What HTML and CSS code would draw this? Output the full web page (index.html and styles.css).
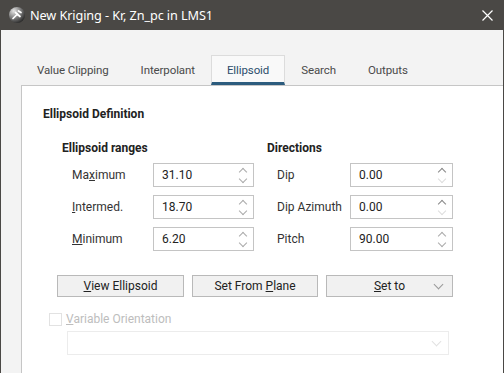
FILE: index.html
```html
<!DOCTYPE html>
<html lang="en">
<head>
  <meta charset="UTF-8">
  <title>New Kriging - Kr, Zn_pc in LMS1</title>
  <link rel="stylesheet" href="styles.css">
</head>
<body>
<div class="window">
  <!-- title bar -->
  <div class="titlebar">
    <svg class="logo" width="16" height="16" viewBox="0 0 16 16">
      <defs>
        <radialGradient id="lg" cx="0.3" cy="0.25" r="0.85">
          <stop offset="0" stop-color="#e6e6e6"/>
          <stop offset="0.45" stop-color="#8a8a8a"/>
          <stop offset="1" stop-color="#202020"/>
        </radialGradient>
      </defs>
      <circle cx="8" cy="8" r="8" fill="url(#lg)"/>
      <path d="M4 11.5 L8.5 7 M6.5 5.5 L11 9.5 M9.5 4 L12 5.5" stroke="#fff" stroke-width="1.7" stroke-linecap="round" fill="none"/>
    </svg>
    <span class="title">New Kriging - Kr, Zn_pc in LMS1</span>
    <svg class="close" width="11" height="11" viewBox="0 0 11 11">
      <path d="M0.5 0.5 L10.5 10.5 M10.5 0.5 L0.5 10.5" stroke="#fff" stroke-width="1.2"/>
    </svg>
  </div>

  <div class="content">
    <div class="tabs">
      <div class="tab">Value Clipping</div>
      <div class="tab">Interpolant</div>
      <div class="tab active">Ellipsoid</div>
      <div class="tab">Search</div>
      <div class="tab">Outputs</div>
    </div>

    <div class="panel">
      <div class="heading">Ellipsoid Definition</div>

      <div class="groups">
        <div class="group ranges">
          <div class="subheading">Ellipsoid ranges</div>
          <div class="row"><span class="label">Ma<u>x</u>imum</span><div class="spin"><span>31.10</span><i class="arrows"><b class="up"></b><b class="down"></b></i></div></div>
          <div class="row"><span class="label"><u>I</u>ntermed.</span><div class="spin"><span>18.70</span><i class="arrows"><b class="up"></b><b class="down"></b></i></div></div>
          <div class="row"><span class="label"><u>M</u>inimum</span><div class="spin"><span>6.20</span><i class="arrows"><b class="up"></b><b class="down"></b></i></div></div>
        </div>
        <div class="group directions">
          <div class="subheading">Directions</div>
          <div class="row"><span class="label">Dip</span><div class="spin"><span>0.00</span><i class="arrows"><b class="up dark"></b><b class="down faint"></b></i></div></div>
          <div class="row"><span class="label">Dip Azimuth</span><div class="spin"><span>0.00</span><i class="arrows"><b class="up dark"></b><b class="down faint"></b></i></div></div>
          <div class="row"><span class="label">Pitch</span><div class="spin"><span>90.00</span><i class="arrows"><b class="up"></b><b class="down"></b></i></div></div>
        </div>
      </div>

      <div class="buttons">
        <div class="btn"><u>V</u>iew Ellipsoid</div>
        <div class="btn">Set From <u>P</u>lane</div>
        <div class="btn dropdown"><u>S</u>et to<b class="chev"></b></div>
      </div>

      <div class="check">
        <span class="box"></span>
        <span><u>V</u>ariable Orientation</span>
      </div>
      <div class="combo"><b class="chev"></b></div>
    </div>
  </div>
</div>
</body>
</html>
```

FILE: styles.css
```css
body {
  margin: 0;
  font-family: Roboto, "Noto Sans", sans-serif;
  font-size: 12px;
  color: #333;
}

.window {
  width: 502px;
  height: 373px;
  border-left: 1px solid #4a4845;
  border-right: 1px solid #4a4845;
  background: #f3f3f3;
  overflow: hidden;
}

.titlebar {
  height: 30px;
  background: #4a4845;
  display: flex;
  align-items: center;
  color: #fff;
}

.logo {
  margin-left: 8px;
}

.title {
  margin-left: 5px;
  font-family: "Noto Sans", sans-serif;
  font-size: 12.7px;
  letter-spacing: -0.1px;
}

.close {
  margin-left: auto;
  margin-right: 10px;
}

.content {
  padding: 25px 0 0 20px;
}

.tabs {
  display: flex;
  height: 30px;
}

.tab {
  padding: 0 16px;
  line-height: 31px;
  font-size: 11.5px;
  letter-spacing: -0.1px;
  color: #4a4a4a;
}

.tab.active {
  background: #f9f9f9;
  border: 1px solid #dcdcdc;
  border-bottom: 3px solid #2c5c7e;
  padding: 0 15px;
  line-height: 28px;
  color: #2c4d6c;
  box-sizing: border-box;
}

.panel {
  width: 460px;
  height: 300px;
  background: #fff;
  border: 1px solid #c6c6c6;
  padding: 20px 0 0 21px;
}

.heading {
  font-weight: bold;
  color: #222;
  line-height: 16px;
}

.groups {
  display: grid;
  grid-template-columns: 205px 190px;
  margin: 18px 0 0 19px;
}

.subheading {
  font-weight: bold;
  color: #222;
  line-height: 16px;
  margin-bottom: 7px;
}

.row {
  display: flex;
  align-items: center;
  padding-left: 10px;
  height: 24px;
  margin-bottom: 8px;
}

.ranges .label {
  width: 81px;
}

.directions .label {
  width: 73px;
}

.spin {
  box-sizing: border-box;
  height: 24px;
  border: 1px solid #c4c4c4;
  display: flex;
  align-items: center;
  padding-left: 8px;
  color: #222;
}

.ranges .spin {
  width: 101px;
}

.directions .spin {
  width: 103px;
}

.arrows {
  margin-left: auto;
  margin-right: 7px;
  display: flex;
  flex-direction: column;
  gap: 5px;
}

.arrows b {
  display: block;
  width: 5px;
  height: 5px;
  border-left: 1px solid #aaa;
  border-top: 1px solid #aaa;
}

.arrows .up {
  transform: translateY(2px) rotate(45deg);
}

.arrows .down {
  transform: translateY(-2px) rotate(225deg);
}

.arrows .dark {
  border-color: #888;
}

.arrows .faint {
  border-color: #ddd;
}

.buttons {
  display: flex;
  gap: 8px;
  margin: 16px 0 0 14px;
}

.btn {
  box-sizing: border-box;
  width: 127px;
  height: 22px;
  line-height: 20px;
  text-align: center;
  background: #f1f1f1;
  border: 1px solid #b9b9b9;
  color: #222;
  position: relative;
}

.btn:nth-child(2) {
  width: 126px;
}

.chev {
  position: absolute;
  right: 10px;
  top: 5px;
  width: 6px;
  height: 6px;
  border-right: 1px solid #999;
  border-bottom: 1px solid #999;
  transform: rotate(45deg);
}

.check {
  display: flex;
  align-items: center;
  gap: 4px;
  margin: 15px 0 0 6px;
  color: #bdbdbd;
  height: 14px;
}

.box {
  width: 11px;
  height: 11px;
  border: 1px solid #e2e2e2;
  background: #fff;
}

.combo {
  box-sizing: border-box;
  position: relative;
  width: 382px;
  height: 24px;
  margin: 5px 0 0 24px;
  border: 1px solid #ececec;
}

.combo .chev {
  right: 8px;
  top: 6px;
  border-color: #e2e2e2;
}
```
